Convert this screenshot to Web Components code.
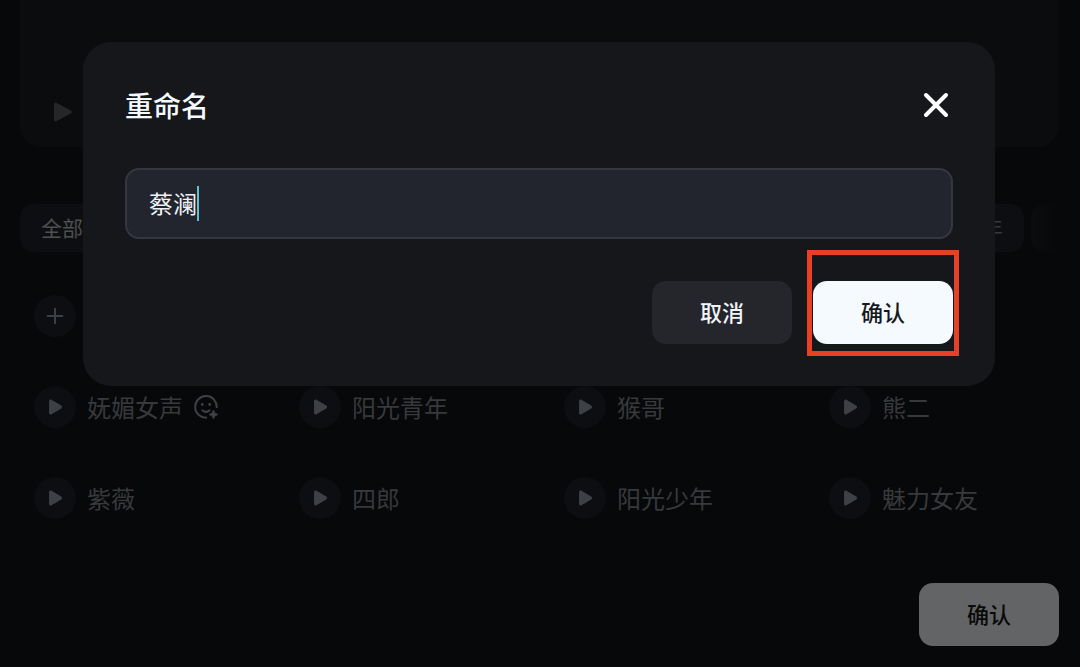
<!DOCTYPE html>
<html lang="zh-CN">
<head>
<meta charset="utf-8">
<title>重命名</title>
<style>
  body {
    margin: 0;
    background: #070809;
    color: #37393c;
    font-family: "Noto Sans CJK SC", sans-serif;
  }
</style>
</head>
<body>
<voice-page>
  <voice-item icon="plus"></voice-item>
  <voice-item name="妩媚女声" style="grid-column-start: 1" emotion></voice-item>
  <voice-item name="阳光青年"></voice-item>
  <voice-item name="猴哥"></voice-item>
  <voice-item name="熊二"></voice-item>
  <voice-item name="紫薇"></voice-item>
  <voice-item name="四郎"></voice-item>
  <voice-item name="阳光少年"></voice-item>
  <voice-item name="魅力女友"></voice-item>
  <action-button slot="footer" kind="dimmed">确认</action-button>
</voice-page>

<rename-dialog>
  <span slot="title">重命名</span>
  <action-button slot="actions">取消</action-button>
  <action-button slot="actions" kind="primary" marked>确认</action-button>
</rename-dialog>

<script>
const PLAY = '<path d="M5.500 5.600v12.800c0 1.600 1.400 2.400 2.700 1.600l10.600-6.400c1.300-.8 1.300-2.400 0-3.200L8.200 4c-1.300-.8-2.700 0-2.700 1.600z" fill="currentColor"/>';
const PLUS = '<path d="M12 4v16M4 12h16" stroke="currentColor" stroke-width="2.200" stroke-linecap="round"/>';

class ActionButton extends HTMLElement {
  constructor() {
    super();
    this.attachShadow({mode: 'open'}).innerHTML = `
      <style>
        :host {
          display: block;
          position: relative;
        }
        button {
          min-width: 140px;
          height: 63px;
          padding: 0 21px 4px;
          border: none;
          border-radius: 14px;
          background: #25262b;
          color: #f0f5fa;
          font: 500 22px/32px "Noto Sans CJK SC", sans-serif;
          display: block;
          cursor: pointer;
        }
        :host([kind=primary]) button {
          background: #f5faff;
          color: #17181b;
        }
        :host([kind=dimmed]) button {
          background: #636466;
          color: #08090a;
        }
        :host([marked])::after {
          content: '';
          position: absolute;
          inset: -31px -6px -12px -6px;
          border: 5px solid #e64026;
          pointer-events: none;
        }
      </style>
      <button type="button"><slot></slot></button>
    `;
  }
}

class VoiceItem extends HTMLElement {
  constructor() {
    super();
    this.attachShadow({mode: 'open'});
  }

  connectedCallback() {
    const name = this.getAttribute('name') || '';
    const plus = this.getAttribute('icon') === 'plus';
    this.shadowRoot.innerHTML = `
      <style>
        :host {
          display: flex;
          align-items: center;
          gap: 11px;
          height: 70px;
          padding: 0 14px;
          box-sizing: border-box;
          font-size: 24px;
          line-height: 36px;
          white-space: nowrap;
        }
        button {
          width: 42px;
          height: 42px;
          flex: none;
          padding: 0;
          border: none;
          border-radius: 50%;
          background: #0d0e12;
          color: #3d4044;
          display: grid;
          place-items: center;
        }
        .emotion {
          color: #3d4044;
        }
      </style>
      <button type="button" aria-label="${plus ? '添加' : '播放' + name}">
        <svg width="22" height="22" viewBox="0 0 24 24" fill="none">${plus ? PLUS : PLAY}</svg>
      </button>
      ${name ? `<span>${name}</span>` : ''}
      ${this.hasAttribute('emotion') ? `
        <svg class="emotion" width="24" height="24" viewBox="0 0 24 24" fill="none">
          <path d="M13 22.600A10.800 10.800 0 1 1 22.700 13" stroke="currentColor" stroke-width="2"/>
          <path d="M8.400 15.300q3.600 3.200 7.200 0" stroke="currentColor" stroke-width="2" stroke-linecap="round"/>
          <circle cx="8.300" cy="9.500" r="1.400" fill="currentColor"/>
          <circle cx="15.700" cy="9.500" r="1.400" fill="currentColor"/>
          <path d="M19.500 15l1.500 3 3 1.500-3 1.500-1.500 3-1.500-3-3-1.500 3-1.500z" fill="currentColor" stroke="currentColor" stroke-width=".6"/>
        </svg>` : ''}
    `;
  }
}

class VoicePage extends HTMLElement {
  constructor() {
    super();
    this.attachShadow({mode: 'open'}).innerHTML = `
      <style>
        :host {
          display: flex;
          flex-direction: column;
          min-height: 100vh;
          padding: 0 21px 21px 20px;
          box-sizing: border-box;
        }
        .player {
          height: 147px;
          padding: 0 32px 23px;
          box-sizing: border-box;
          border-radius: 0 0 21px 21px;
          background: #0b0c0e;
          display: flex;
          align-items: flex-end;
        }
        .player button {
          padding: 0;
          border: none;
          background: none;
          color: #242628;
          display: flex;
        }
        .tabs {
          display: flex;
          gap: 7px;
          margin: 57px 0 29px;
        }
        .tabs button {
          height: 48px;
          padding: 0 21px 2px;
          border: none;
          border-radius: 14px;
          background: #0d0e11;
          color: #4e4f51;
          font: 21px/30px "Noto Sans CJK SC", sans-serif;
        }
        .tabs .young {
          margin-left: auto;
          color: #36383a;
        }
        .tabs .more {
          width: 28px;
          padding: 0;
          border-radius: 14px 0 0 14px;
          background: linear-gradient(to right, #0b0c0e, #070809);
        }
        .voices {
          display: grid;
          grid-template-columns: repeat(4, 1fr);
          gap: 21px;
        }
        footer {
          display: flex;
          justify-content: flex-end;
          margin-top: auto;
        }
      </style>
      <section class="player">
        <button type="button" aria-label="播放">
          <svg width="24" height="24" viewBox="0 0 24 24">
            <path d="M2 4.400v15.200c0 1.600 1.400 2.300 2.700 1.600l14-7.600c1.400-.8 1.400-2.400 0-3.200l-14-7.600C3.400 2.100 2 2.800 2 4.400z" fill="currentColor"/>
          </svg>
        </button>
      </section>
      <nav class="tabs">
        <button type="button">全部</button>
        <button type="button" class="young">年</button>
        <button type="button" class="more" aria-label="更多"></button>
      </nav>
      <main class="voices"><slot></slot></main>
      <footer><slot name="footer"></slot></footer>
    `;
  }
}

class RenameDialog extends HTMLElement {
  constructor() {
    super();
    this.attachShadow({mode: 'open'}).innerHTML = `
      <style>
        :host {
          display: flex;
          flex-direction: column;
          gap: 42px;
          position: absolute;
          inset: 42px 85px auto 83px;
          padding: 42px;
          border-radius: 28px;
          background: #16171a;
          color: #f5faff;
        }
        header {
          display: flex;
          align-items: center;
          justify-content: space-between;
        }
        h2 {
          margin: 0;
          font-size: 28px;
          font-weight: 500;
          line-height: 42px;
        }
        .close {
          padding: 0 3px;
          border: none;
          background: none;
          color: #fff;
          display: flex;
        }
        .field {
          display: flex;
          align-items: center;
          height: 71px;
          padding: 0 22px;
          box-sizing: border-box;
          border: 2px solid #343740;
          border-radius: 14px;
          background: #22252d;
        }
        input {
          field-sizing: content;
          padding: 0 0 2px;
          border: none;
          outline: none;
          background: none;
          color: #f0f2f5;
          font: 24px/36px "Noto Sans CJK SC", sans-serif;
        }
        .caret {
          width: 2px;
          height: 35px;
          background: #5cc3d6;
        }
        .actions {
          display: flex;
          justify-content: flex-end;
          gap: 21px;
        }
      </style>
      <header>
        <h2><slot name="title"></slot></h2>
        <button type="button" class="close" aria-label="关闭">
          <svg width="28" height="28" viewBox="0 0 28 28">
            <path d="M4 4l20 20M24 4L4 24" stroke="currentColor" stroke-width="4" stroke-linecap="round"/>
          </svg>
        </button>
      </header>
      <label class="field">
        <input type="text" value="蔡澜" aria-label="名称">
        <span class="caret"></span>
      </label>
      <div class="actions"><slot name="actions"></slot></div>
    `;
  }
}

customElements.define('action-button', ActionButton);
customElements.define('voice-item', VoiceItem);
customElements.define('voice-page', VoicePage);
customElements.define('rename-dialog', RenameDialog);
</script>
</body>
</html>
